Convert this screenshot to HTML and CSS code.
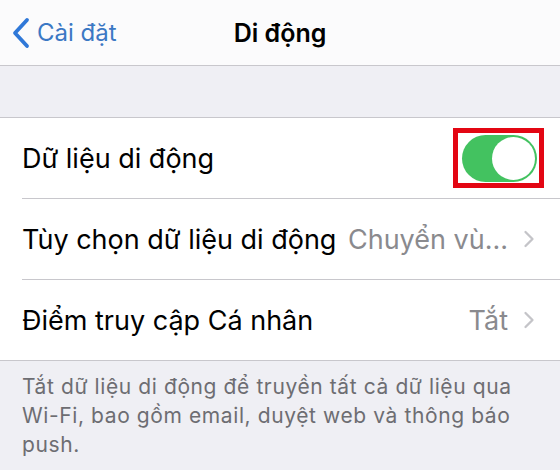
FILE: index.html
```html
<!DOCTYPE html>
<html lang="vi">
<head>
<meta charset="utf-8">
<link rel="stylesheet" href="styles.css">
</head>
<body>
<div class="screen">
  <header class="nav">
    <div class="back">
      <svg class="back-chev" width="20" height="32" viewBox="0 0 20 32"><path d="M16 3 L4 16 L16 29" fill="none" stroke="#2f78d8" stroke-width="3.8" stroke-linecap="round" stroke-linejoin="round"/></svg>
      <span class="back-label">Cài đặt</span>
    </div>
    <div class="title">Di động</div>
  </header>
  <div class="gap"></div>
  <section class="group">
    <div class="row">
      <span class="label">Dữ liệu di động</span>
      <span class="highlight"><span class="switch"><span class="knob"></span></span></span>
    </div>
    <div class="row">
      <span class="label">Tùy chọn dữ liệu di động</span>
      <span class="value">Chuyển vù...</span>
      <svg class="chev" width="14" height="20" viewBox="0 0 14 20"><path d="M3.5 3 L10.5 10 L3.5 17" fill="none" stroke="#c4c4c8" stroke-width="2.3" stroke-linecap="round" stroke-linejoin="round"/></svg>
    </div>
    <div class="row">
      <span class="label">Điểm truy cập Cá nhân</span>
      <span class="value">Tắt</span>
      <svg class="chev" width="14" height="20" viewBox="0 0 14 20"><path d="M3.5 3 L10.5 10 L3.5 17" fill="none" stroke="#c4c4c8" stroke-width="2.3" stroke-linecap="round" stroke-linejoin="round"/></svg>
    </div>
  </section>
  <p class="footer">Tắt dữ liệu di động để truyền tất cả dữ liệu qua Wi-Fi, bao gồm email, duyệt web và thông báo push.</p>
</div>
</body>
</html>
```
FILE: styles.css
```css
html, body {
  margin: 0;
  padding: 0;
}
body {
  width: 560px;
  height: 470px;
  overflow: hidden;
  background: #efeff4;
  font-family: Inter, Roboto, "Liberation Sans", sans-serif;
}
.screen {
  display: flex;
  flex-direction: column;
}
.nav {
  height: 65px;
  background: #fbfbfc;
  border-bottom: 1px solid #c8c7cc;
  position: relative;
  display: flex;
  align-items: center;
}
.back {
  display: flex;
  align-items: center;
  gap: 6px;
  padding-left: 11px;
}
.back-label {
  color: #3b78c4;
  font-size: 24px;
}
.title {
  position: absolute;
  left: 0;
  right: 0;
  text-align: center;
  font-size: 25px;
  font-weight: 600;
  color: #000;
  pointer-events: none;
}
.gap {
  height: 51px;
  border-bottom: 1px solid #c8c7cc;
}
.group {
  background: #fff;
  border-bottom: 1px solid #c8c7cc;
  padding-left: 22px;
}
.row {
  height: 80px;
  display: flex;
  align-items: center;
  padding-right: 24px;
  border-bottom: 1px solid #c8c7cc;
}
.row:last-child {
  border-bottom: none;
}
.label {
  font-size: 27px;
  color: #000;
  flex: 1;
  white-space: nowrap;
}
.value {
  font-size: 27px;
  color: #8a8a8e;
  margin-right: 14px;
  white-space: nowrap;
}
.highlight {
  border: 5px solid #e30613;
  padding: 2px 2px 1px 4px;
  margin-right: -8px;
  display: flex;
}
.switch {
  width: 75px;
  height: 47px;
  border-radius: 24px;
  background: #43c260;
  position: relative;
  display: block;
}
.knob {
  position: absolute;
  right: 2px;
  top: 2px;
  width: 43px;
  height: 43px;
  border-radius: 50%;
  background: #fff;
}
.footer {
  margin: 0;
  padding: 11px 22px 0;
  font-size: 21px;
  line-height: 29px;
  letter-spacing: 0.6px;
  color: #6d6d72;
}
```
